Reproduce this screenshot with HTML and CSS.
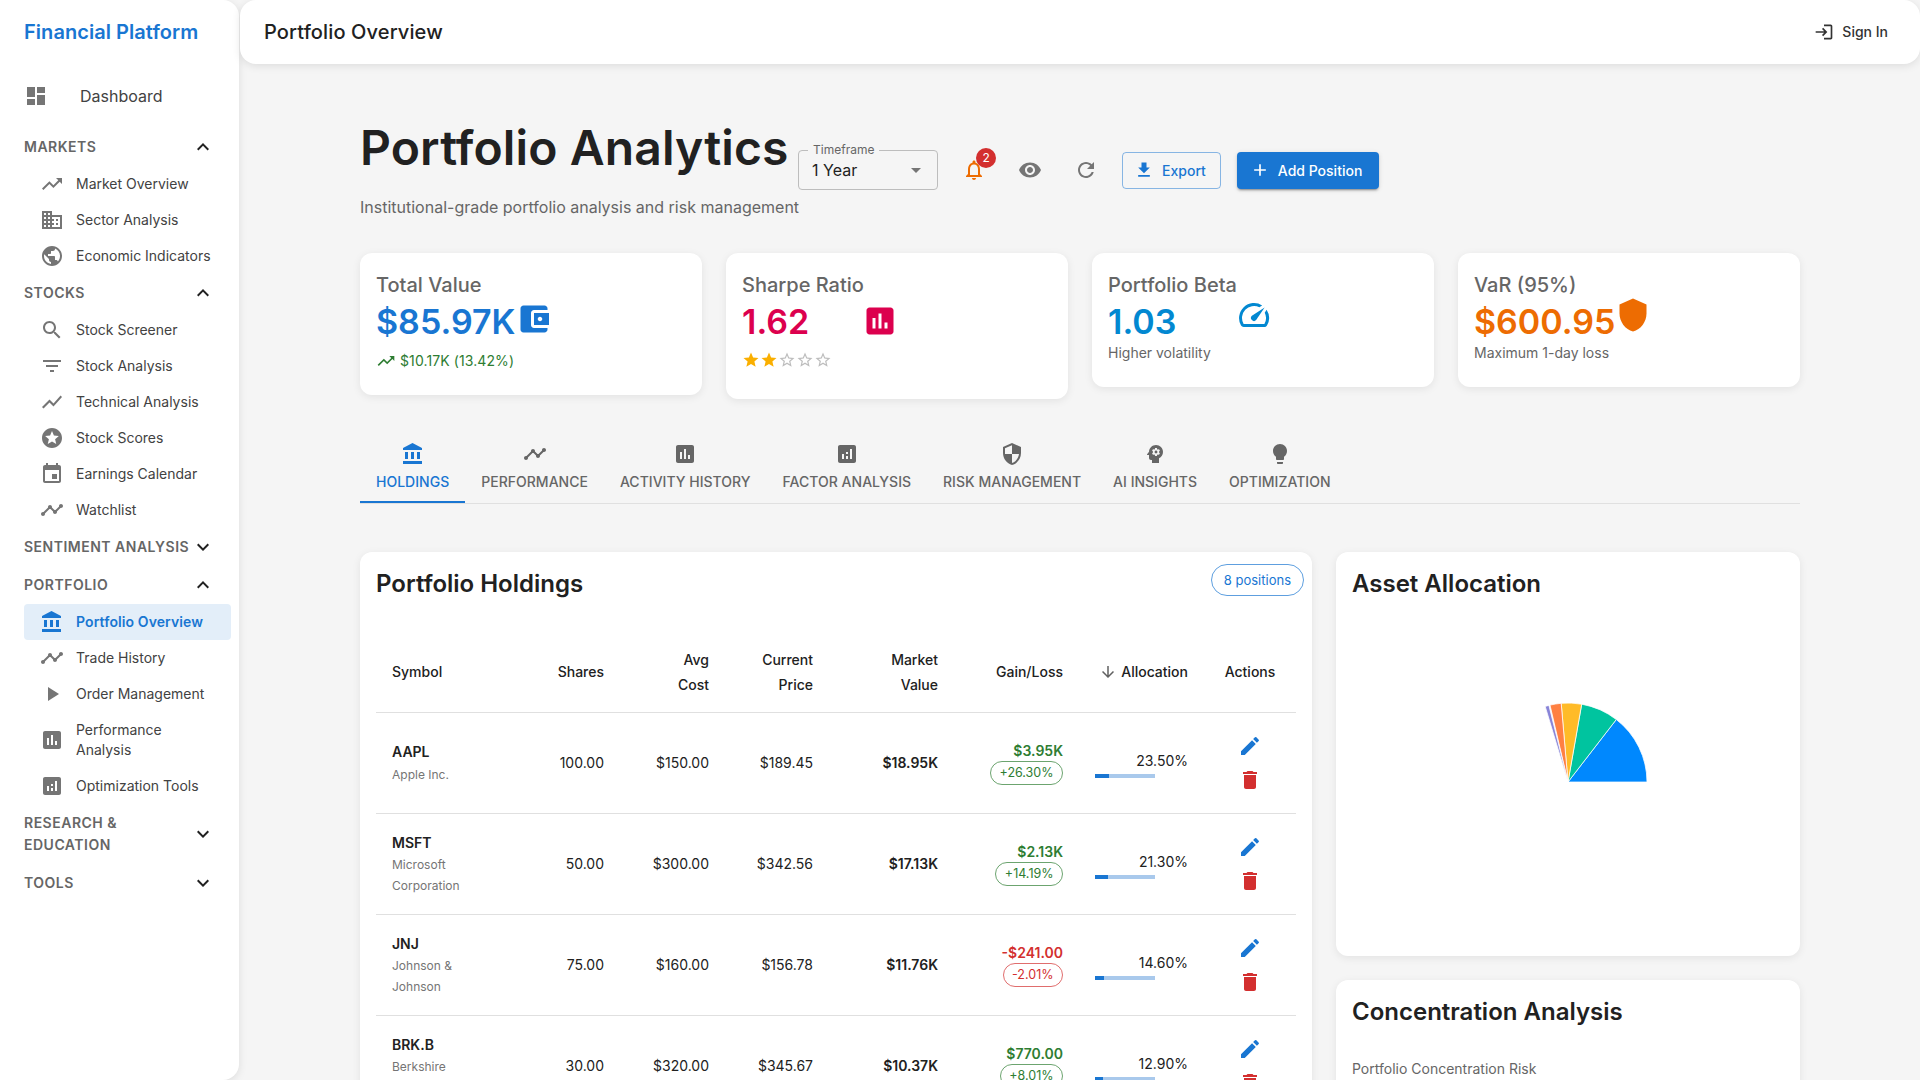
FILE: index.html
```html
<!DOCTYPE html>
<html lang="en">
<head>
    <meta charset="UTF-8">
    <meta name="viewport" content="width=device-width, initial-scale=1.0">
    <title>Portfolio Analytics</title>
    <link rel="stylesheet" href="styles.css">
</head>
<body>
    <svg class="sprite" xmlns="http://www.w3.org/2000/svg">
        <symbol id="i-dashboard" viewBox="0 0 24 24"><path d="M3 13h8V3H3v10zm0 8h8v-6H3v6zm10 0h8V11h-8v10zm0-18v6h8V3h-8z"/></symbol>
        <symbol id="i-less" viewBox="0 0 24 24"><path d="M12 8l-6 6 1.41 1.41L12 10.83l4.59 4.58L18 14z"/></symbol>
        <symbol id="i-more" viewBox="0 0 24 24"><path d="M16.59 8.59L12 13.17 7.41 8.59 6 10l6 6 6-6z"/></symbol>
        <symbol id="i-trending" viewBox="0 0 24 24"><path d="M16 6l2.29 2.29-4.88 4.88-4-4L2 16.59 3.41 18l6-6 4 4 6.3-6.29L22 12V6z"/></symbol>
        <symbol id="i-business" viewBox="0 0 24 24"><path d="M12 7V3H2v18h20V7H12zM6 19H4v-2h2v2zm0-4H4v-2h2v2zm0-4H4V9h2v2zm0-4H4V5h2v2zm4 12H8v-2h2v2zm0-4H8v-2h2v2zm0-4H8V9h2v2zm0-4H8V5h2v2zm10 12h-8v-2h2v-2h-2v-2h2v-2h-2V9h8v10zm-2-8h-2v2h2v-2zm0 4h-2v2h2v-2z"/></symbol>
        <symbol id="i-public" viewBox="0 0 24 24"><path d="M12 2C6.48 2 2 6.48 2 12s4.48 10 10 10 10-4.48 10-10S17.52 2 12 2zm-1 17.93c-3.95-.49-7-3.85-7-7.93 0-.62.08-1.21.21-1.79L9 15v1c0 1.1.9 2 2 2v1.93zm6.9-2.54c-.26-.81-1-1.39-1.9-1.39h-1v-3c0-.55-.45-1-1-1H8v-2h2c.55 0 1-.45 1-1V7h2c1.1 0 2-.9 2-2v-.41c2.93 1.19 5 4.06 5 7.41 0 2.08-.8 3.97-2.1 5.39z"/></symbol>
        <symbol id="i-search" viewBox="0 0 24 24"><path d="M15.5 14h-.79l-.28-.27C15.41 12.59 16 11.11 16 9.5 16 5.91 13.09 3 9.5 3S3 5.91 3 9.5 5.91 16 9.5 16c1.61 0 3.09-.59 4.23-1.57l.27.28v.79l5 4.99L20.49 19l-4.99-5zm-6 0C7.01 14 5 11.99 5 9.5S7.01 5 9.5 5 14 7.01 14 9.5 11.99 14 9.5 14z"/></symbol>
        <symbol id="i-filter" viewBox="0 0 24 24"><path d="M10 18h4v-2h-4v2zM3 6v2h18V6H3zm3 7h12v-2H6v2z"/></symbol>
        <symbol id="i-chart" viewBox="0 0 24 24"><path d="M3.5 18.49l6-6.01 4 4L22 6.92l-1.41-1.41-7.09 7.97-4-4L2 16.99z"/></symbol>
        <symbol id="i-stars" viewBox="0 0 24 24"><path d="M11.99 2C6.47 2 2 6.48 2 12s4.47 10 9.99 10C17.52 22 22 17.52 22 12S17.52 2 11.99 2zm4.24 16L12 15.45 7.77 18l1.12-4.81-3.73-3.23 4.92-.42L12 5l1.92 4.53 4.92.42-3.73 3.23L16.23 18z"/></symbol>
        <symbol id="i-event" viewBox="0 0 24 24"><path d="M17 12h-5v5h5v-5zM16 1v2H8V1H6v2H5c-1.11 0-1.99.9-1.99 2L3 19c0 1.1.89 2 2 2h14c1.1 0 2-.9 2-2V5c0-1.1-.9-2-2-2h-1V1h-2zm3 18H5V8h14v11z"/></symbol>
        <symbol id="i-timeline" viewBox="0 0 24 24"><path d="M23 8c0 1.1-.9 2-2 2-.18 0-.35-.02-.51-.07l-3.56 3.55c.05.16.07.34.07.52 0 1.1-.9 2-2 2s-2-.9-2-2c0-.18.02-.36.07-.52l-2.55-2.55c-.16.05-.34.07-.52.07s-.36-.02-.52-.07l-4.55 4.56c.05.16.07.33.07.51 0 1.1-.9 2-2 2s-2-.9-2-2 .9-2 2-2c.18 0 .35.02.51.07l4.56-4.55C8.02 9.36 8 9.18 8 9c0-1.1.9-2 2-2s2 .9 2 2c0 .18-.02.36-.07.52l2.55 2.55c.16-.05.34-.07.52-.07s.36.02.52.07l3.55-3.56C19.02 8.35 19 8.18 19 8c0-1.1.9-2 2-2s2 .9 2 2z"/></symbol>
        <symbol id="i-bank" viewBox="0 0 24 24"><path d="M4 10v7h3v-7H4zm6 0v7h3v-7h-3zM2 22h19v-3H2v3zm14-12v7h3v-7h-3zm-4.5-9L2 6v2h19V6l-9.5-5z"/></symbol>
        <symbol id="i-play" viewBox="0 0 24 24"><path d="M8 5v14l11-7z"/></symbol>
        <symbol id="i-assessment" viewBox="0 0 24 24"><path d="M19 3H5c-1.1 0-2 .9-2 2v14c0 1.1.9 2 2 2h14c1.1 0 2-.9 2-2V5c0-1.1-.9-2-2-2zM9 17H7v-7h2v7zm4 0h-2V7h2v10zm4 0h-2v-4h2v4z"/></symbol>
        <symbol id="i-analytics" viewBox="0 0 24 24"><path d="M19 3H5c-1.1 0-2 .9-2 2v14c0 1.1.9 2 2 2h14c1.1 0 2-.9 2-2V5c0-1.1-.9-2-2-2zM9 17H7v-5h2v5zm4 0h-2v-3h2v3zm0-5h-2v-2h2v2zm4 5h-2V7h2v10z"/></symbol>
        <symbol id="i-login" viewBox="0 0 24 24"><path d="M11 7L9.6 8.4l2.6 2.6H2v2h10.2l-2.6 2.6L11 17l5-5-5-5zm9 12h-8v2h8c1.1 0 2-.9 2-2V5c0-1.1-.9-2-2-2h-8v2h8v14z"/></symbol>
        <symbol id="i-bell" viewBox="0 0 24 24"><path d="M12 22c1.1 0 2-.9 2-2h-4c0 1.1.9 2 2 2zm6-6v-5c0-3.07-1.63-5.64-4.5-6.32V4c0-.83-.67-1.5-1.5-1.5s-1.5.67-1.5 1.5v.68C7.64 5.36 6 7.92 6 11v5l-2 2v1h16v-1l-2-2zm-2 1H8v-6c0-2.48 1.51-4.5 4-4.5s4 2.02 4 4.5v6z"/></symbol>
        <symbol id="i-eye" viewBox="0 0 24 24"><path d="M12 4.5C7 4.5 2.73 7.61 1 12c1.73 4.39 6 7.5 11 7.5s9.27-3.11 11-7.5c-1.73-4.39-6-7.5-11-7.5zM12 17c-2.76 0-5-2.24-5-5s2.24-5 5-5 5 2.24 5 5-2.24 5-5 5zm0-8c-1.66 0-3 1.34-3 3s1.34 3 3 3 3-1.34 3-3-1.34-3-3-3z"/></symbol>
        <symbol id="i-refresh" viewBox="0 0 24 24"><path d="M17.65 6.35C16.2 4.9 14.21 4 12 4c-4.42 0-7.99 3.58-7.99 8s3.57 8 7.99 8c3.73 0 6.84-2.55 7.73-6h-2.08c-.82 2.33-3.04 4-5.65 4-3.31 0-6-2.69-6-6s2.69-6 6-6c1.66 0 3.14.69 4.22 1.78L13 11h7V4l-2.35 2.35z"/></symbol>
        <symbol id="i-download" viewBox="0 0 24 24"><path d="M19 9h-4V3H9v6H5l7 7 7-7zM5 18v2h14v-2H5z"/></symbol>
        <symbol id="i-add" viewBox="0 0 24 24"><path d="M19 13h-6v6h-2v-6H5v-2h6V5h2v6h6v2z"/></symbol>
        <symbol id="i-caret" viewBox="0 0 24 24"><path d="M7 10l5 5 5-5z"/></symbol>
        <symbol id="i-wallet" viewBox="0 0 24 24"><path d="M21 18v1c0 1.1-.9 2-2 2H5c-1.11 0-2-.9-2-2V5c0-1.1.89-2 2-2h14c1.1 0 2 .9 2 2v1h-9c-1.11 0-2 .9-2 2v8c0 1.1.89 2 2 2h9zm-9-2h10V8H12v8zm4-2.5c-.83 0-1.5-.67-1.5-1.5s.67-1.5 1.5-1.5 1.5.67 1.5 1.5-.67 1.5-1.5 1.5z"/></symbol>
        <symbol id="i-speed" viewBox="0 0 24 24"><path d="M20.38 8.57l-1.23 1.85a8 8 0 0 1-.22 7.58H5.07A8 8 0 0 1 15.58 6.85l1.85-1.23A10 10 0 0 0 3.35 19a2 2 0 0 0 1.72 1h13.85a2 2 0 0 0 1.74-1 10 10 0 0 0-.27-10.44zm-9.79 6.84a2 2 0 0 0 2.83 0l5.66-8.49-8.49 5.66a2 2 0 0 0 0 2.83z"/></symbol>
        <symbol id="i-shield" viewBox="0 0 24 24"><path d="M12 1L3 5v6c0 5.55 3.84 10.74 9 12 5.16-1.26 9-6.45 9-12V5l-9-4z"/></symbol>
        <symbol id="i-security" viewBox="0 0 24 24"><path d="M12 1L3 5v6c0 5.55 3.84 10.74 9 12 5.16-1.26 9-6.45 9-12V5l-9-4zm0 10.99h7c-.53 4.12-3.28 7.79-7 8.94V12H5V6.3l7-3.11v8.8z"/></symbol>
        <symbol id="i-psychology" viewBox="0 0 24 24"><path d="M13 8.57c-.79 0-1.43.64-1.43 1.43s.64 1.43 1.43 1.43 1.43-.64 1.43-1.43-.64-1.43-1.43-1.43z"/><path d="M13 3C9.25 3 6.2 5.94 6.02 9.64L4.1 12.2c-.25.33-.01.8.4.8H6v3c0 1.1.9 2 2 2h1v3h7v-4.68c2.36-1.12 4-3.53 4-6.32 0-3.87-3.13-7-7-7zm3 7c0 .13-.01.26-.03.39l.83.66c.08.06.1.16.05.25l-.8 1.39c-.05.09-.16.12-.24.09l-.99-.4c-.21.16-.43.29-.67.39L14 13.83c-.01.1-.1.17-.2.17h-1.6c-.1 0-.18-.07-.2-.17l-.15-1.06c-.25-.1-.47-.23-.68-.39l-.99.4c-.09.03-.2 0-.25-.09l-.8-1.39c-.05-.08-.03-.19.05-.25l.84-.66c-.02-.13-.03-.26-.03-.39 0-.13.02-.27.04-.39l-.85-.66c-.08-.06-.1-.16-.05-.26l.8-1.38c.05-.09.15-.12.24-.09l1 .4c.2-.15.43-.29.67-.39L12 6.17c.02-.1.1-.17.2-.17h1.6c.1 0 .18.07.2.17l.15 1.06c.24.1.46.23.67.39l1-.4c.09-.03.2 0 .24.09l.8 1.38c.05.09.03.2-.05.26l-.85.66c.03.12.04.25.04.39z"/></symbol>
        <symbol id="i-bulb" viewBox="0 0 24 24"><path d="M9 21c0 .55.45 1 1 1h4c.55 0 1-.45 1-1v-1H9v1zm3-19C8.14 2 5 5.14 5 9c0 2.38 1.19 4.47 3 5.74V17c0 .55.45 1 1 1h6c.55 0 1-.45 1-1v-2.26c1.81-1.27 3-3.36 3-5.74 0-3.86-3.14-7-7-7z"/></symbol>
        <symbol id="i-edit" viewBox="0 0 24 24"><path d="M3 17.25V21h3.75L17.81 9.94l-3.75-3.75L3 17.25zM20.71 7.04c.39-.39.39-1.02 0-1.41l-2.34-2.34a.9959.9959 0 0 0-1.41 0l-1.83 1.83 3.75 3.75 1.83-1.83z"/></symbol>
        <symbol id="i-delete" viewBox="0 0 24 24"><path d="M6 19c0 1.1.9 2 2 2h8c1.1 0 2-.9 2-2V7H6v12zM19 4h-3.5l-1-1h-5l-1 1H5v2h14V4z"/></symbol>
        <symbol id="i-down" viewBox="0 0 24 24"><path d="M20 12l-1.41-1.41L13 16.17V4h-2v12.17l-5.58-5.59L4 12l8 8 8-8z"/></symbol>
        <symbol id="i-star" viewBox="0 0 24 24"><path d="M12 17.27L18.18 21l-1.64-7.03L22 9.24l-7.19-.61L12 2 9.19 8.63 2 9.24l5.46 4.73L5.82 21z"/></symbol>
        <symbol id="i-star-o" viewBox="0 0 24 24"><path d="M22 9.24l-7.19-.62L12 2 9.19 8.63 2 9.24l5.46 4.73L5.82 21 12 17.27 18.18 21l-1.63-7.03L22 9.24zM12 15.4l-3.76 2.27 1-4.28-3.32-2.88 4.38-.38L12 6.1l1.71 4.04 4.38.38-3.32 2.88 1 4.28L12 15.4z"/></symbol>
    </svg>

    <aside class="sidebar">
        <div class="logo">Financial Platform</div>
        <a class="nav-top"><svg class="ic"><use href="#i-dashboard"/></svg><span>Dashboard</span></a>

        <div class="nav-head"><span>Markets</span><svg class="ic"><use href="#i-less"/></svg></div>
        <a class="nav-item"><svg class="ic"><use href="#i-trending"/></svg><span>Market Overview</span></a>
        <a class="nav-item"><svg class="ic"><use href="#i-business"/></svg><span>Sector Analysis</span></a>
        <a class="nav-item"><svg class="ic"><use href="#i-public"/></svg><span>Economic Indicators</span></a>

        <div class="nav-head"><span>Stocks</span><svg class="ic"><use href="#i-less"/></svg></div>
        <a class="nav-item"><svg class="ic"><use href="#i-search"/></svg><span>Stock Screener</span></a>
        <a class="nav-item"><svg class="ic"><use href="#i-filter"/></svg><span>Stock Analysis</span></a>
        <a class="nav-item"><svg class="ic"><use href="#i-chart"/></svg><span>Technical Analysis</span></a>
        <a class="nav-item"><svg class="ic"><use href="#i-stars"/></svg><span>Stock Scores</span></a>
        <a class="nav-item"><svg class="ic"><use href="#i-event"/></svg><span>Earnings Calendar</span></a>
        <a class="nav-item"><svg class="ic"><use href="#i-timeline"/></svg><span>Watchlist</span></a>

        <div class="nav-head"><span>Sentiment Analysis</span><svg class="ic"><use href="#i-more"/></svg></div>

        <div class="nav-head"><span>Portfolio</span><svg class="ic"><use href="#i-less"/></svg></div>
        <a class="nav-item active"><svg class="ic"><use href="#i-bank"/></svg><span>Portfolio Overview</span></a>
        <a class="nav-item"><svg class="ic"><use href="#i-timeline"/></svg><span>Trade History</span></a>
        <a class="nav-item"><svg class="ic"><use href="#i-play"/></svg><span>Order Management</span></a>
        <a class="nav-item"><svg class="ic"><use href="#i-assessment"/></svg><span>Performance Analysis</span></a>
        <a class="nav-item"><svg class="ic"><use href="#i-analytics"/></svg><span>Optimization Tools</span></a>

        <div class="nav-head"><span>Research &amp; Education</span><svg class="ic"><use href="#i-more"/></svg></div>
        <div class="nav-head"><span>Tools</span><svg class="ic"><use href="#i-more"/></svg></div>
    </aside>

    <div class="page">
        <header class="appbar">
            <div class="appbar-title">Portfolio Overview</div>
            <a class="sign-in"><svg class="ic ic-20"><use href="#i-login"/></svg>Sign In</a>
        </header>

        <main class="content">
            <section class="page-head">
                <div class="title-block">
                    <h1>Portfolio Analytics</h1>
                    <p>Institutional-grade portfolio analysis and risk management</p>
                </div>
                <div class="select">
                    <span class="select-label">Timeframe</span>
                    <span>1 Year</span>
                    <svg class="ic"><use href="#i-caret"/></svg>
                </div>
                <div class="icon-btn orange">
                    <svg class="ic"><use href="#i-bell"/></svg>
                    <span class="badge">2</span>
                </div>
                <div class="icon-btn"><svg class="ic"><use href="#i-eye"/></svg></div>
                <div class="icon-btn"><svg class="ic"><use href="#i-refresh"/></svg></div>
                <button class="btn btn-outline"><svg class="ic ic-20"><use href="#i-download"/></svg>Export</button>
                <button class="btn btn-solid"><svg class="ic ic-20"><use href="#i-add"/></svg>Add Position</button>
            </section>

            <section class="stats">
                <div class="stat">
                    <div class="stat-title">Total Value</div>
                    <div class="stat-row blue">
                        <span class="stat-value">$85.97K</span>
                        <svg class="ic ic-36"><use href="#i-wallet"/></svg>
                    </div>
                    <div class="stat-change"><svg class="ic ic-20"><use href="#i-trending"/></svg>$10.17K (13.42%)</div>
                </div>
                <div class="stat">
                    <div class="stat-title">Sharpe Ratio</div>
                    <div class="stat-row pink">
                        <span class="stat-value w-120">1.62</span>
                        <svg class="ic ic-36 nudge-low"><use href="#i-assessment"/></svg>
                    </div>
                    <div class="rating">
                        <svg class="ic"><use href="#i-star"/></svg>
                        <svg class="ic"><use href="#i-star"/></svg>
                        <svg class="ic off"><use href="#i-star-o"/></svg>
                        <svg class="ic off"><use href="#i-star-o"/></svg>
                        <svg class="ic off"><use href="#i-star-o"/></svg>
                    </div>
                </div>
                <div class="stat">
                    <div class="stat-title">Portfolio Beta</div>
                    <div class="stat-row sky">
                        <span class="stat-value w-128">1.03</span>
                        <svg class="ic ic-36 nudge-up"><use href="#i-speed"/></svg>
                    </div>
                    <div class="stat-note">Higher volatility</div>
                </div>
                <div class="stat">
                    <div class="stat-title">VaR (95%)</div>
                    <div class="stat-row orange">
                        <span class="stat-value">$600.95</span>
                        <svg class="ic ic-36 nudge-up"><use href="#i-shield"/></svg>
                    </div>
                    <div class="stat-note">Maximum 1-day loss</div>
                </div>
            </section>

            <nav class="tabs">
                <a class="tab active"><svg class="ic"><use href="#i-bank"/></svg>Holdings</a>
                <a class="tab"><svg class="ic"><use href="#i-timeline"/></svg>Performance</a>
                <a class="tab"><svg class="ic"><use href="#i-assessment"/></svg>Activity History</a>
                <a class="tab"><svg class="ic"><use href="#i-analytics"/></svg>Factor Analysis</a>
                <a class="tab"><svg class="ic"><use href="#i-security"/></svg>Risk Management</a>
                <a class="tab"><svg class="ic"><use href="#i-psychology"/></svg>AI Insights</a>
                <a class="tab"><svg class="ic"><use href="#i-bulb"/></svg>Optimization</a>
            </nav>

            <section class="columns">
                <div class="card">
                    <div class="card-head">
                        <h2>Portfolio Holdings</h2>
                        <span class="chip-count">8 positions</span>
                    </div>
                    <table class="holdings">
                        <thead>
                            <tr>
                                <th class="col-symbol">Symbol</th>
                                <th class="col-shares">Shares</th>
                                <th class="col-avg">Avg<br>Cost</th>
                                <th class="col-price">Current<br>Price</th>
                                <th class="col-market">Market<br>Value</th>
                                <th class="col-gain">Gain/Loss</th>
                                <th class="col-alloc"><svg class="ic ic-18"><use href="#i-down"/></svg>Allocation</th>
                                <th class="col-actions">Actions</th>
                            </tr>
                        </thead>
                        <tbody>
                            <tr>
                                <td class="col-symbol"><div class="ticker">AAPL</div><div class="company">Apple Inc.</div></td>
                                <td>100.00</td>
                                <td>$150.00</td>
                                <td>$189.45</td>
                                <td class="strong">$18.95K</td>
                                <td><div class="gain up">$3.95K</div><span class="chip up">+26.30%</span></td>
                                <td><div class="pct">23.50%</div><div class="bar"><div class="bar-fill" style="width: 23.5%"></div></div></td>
                                <td class="col-actions"><svg class="ic act-edit"><use href="#i-edit"/></svg><svg class="ic act-del"><use href="#i-delete"/></svg></td>
                            </tr>
                            <tr>
                                <td class="col-symbol"><div class="ticker">MSFT</div><div class="company">Microsoft Corporation</div></td>
                                <td>50.00</td>
                                <td>$300.00</td>
                                <td>$342.56</td>
                                <td class="strong">$17.13K</td>
                                <td><div class="gain up">$2.13K</div><span class="chip up">+14.19%</span></td>
                                <td><div class="pct">21.30%</div><div class="bar"><div class="bar-fill" style="width: 21.3%"></div></div></td>
                                <td class="col-actions"><svg class="ic act-edit"><use href="#i-edit"/></svg><svg class="ic act-del"><use href="#i-delete"/></svg></td>
                            </tr>
                            <tr>
                                <td class="col-symbol"><div class="ticker">JNJ</div><div class="company">Johnson &amp; Johnson</div></td>
                                <td>75.00</td>
                                <td>$160.00</td>
                                <td>$156.78</td>
                                <td class="strong">$11.76K</td>
                                <td><div class="gain down">-$241.00</div><span class="chip down">-2.01%</span></td>
                                <td><div class="pct">14.60%</div><div class="bar"><div class="bar-fill" style="width: 14.6%"></div></div></td>
                                <td class="col-actions"><svg class="ic act-edit"><use href="#i-edit"/></svg><svg class="ic act-del"><use href="#i-delete"/></svg></td>
                            </tr>
                            <tr>
                                <td class="col-symbol"><div class="ticker">BRK.B</div><div class="company">Berkshire Hathaway</div></td>
                                <td>30.00</td>
                                <td>$320.00</td>
                                <td>$345.67</td>
                                <td class="strong">$10.37K</td>
                                <td><div class="gain up">$770.00</div><span class="chip up">+8.01%</span></td>
                                <td><div class="pct">12.90%</div><div class="bar"><div class="bar-fill" style="width: 12.9%"></div></div></td>
                                <td class="col-actions"><svg class="ic act-edit"><use href="#i-edit"/></svg><svg class="ic act-del"><use href="#i-delete"/></svg></td>
                            </tr>
                        </tbody>
                    </table>
                </div>

                <div class="side">
                    <div class="card">
                        <h2>Asset Allocation</h2>
                        <svg class="pie" viewBox="-216 -150 432 300">
                            <path fill="#0088fe" d="M0 0L79 0A79 79 0 0 0 48.3 -62.5Z"/>
                            <path fill="#00c49f" d="M0 0L48.3 -62.5A79 79 0 0 0 13.7 -77.8Z"/>
                            <path fill="#ffbb28" d="M0 0L13.7 -77.8A79 79 0 0 0 -6.8 -78.7Z"/>
                            <path fill="#ff8042" d="M0 0L-6.8 -78.7A79 79 0 0 0 -18 -76.9Z"/>
                            <path fill="#8884d8" d="M0 0L-19.1 -76.6A79 79 0 0 0 -22.8 -75.6Z"/>
                        </svg>
                    </div>
                    <div class="card">
                        <h2>Concentration Analysis</h2>
                        <p class="risk-label">Portfolio Concentration Risk</p>
                    </div>
                </div>
            </section>
        </main>
    </div>
</body>
</html>
```

FILE: styles.css
```css
* { box-sizing: border-box; }
html, body {
    height: 100%;
    margin: 0;
    overflow: hidden;
}
body {
    display: flex;
    font-family: 'Inter', 'Liberation Sans', sans-serif;
    background-color: #f5f5f5;
    color: #212121;
}
h1, h2, p { margin: 0; }
.sprite { display: none; }

.ic {
    width: 24px;
    height: 24px;
    fill: currentColor;
    flex: none;
}
.ic-18 { width: 18px; height: 18px; }
.ic-20 { width: 20px; height: 20px; }
.ic-36 { width: 36px; height: 36px; }

/* sidebar */
.sidebar {
    width: 239px;
    margin-right: 1px;
    flex: none;
    background: white;
    border-radius: 0 16px 16px 0;
    box-shadow: 0px 2px 8px rgba(0, 0, 0, 0.1);
    padding-left: 24px;
}
.logo {
    height: 74px;
    padding-top: 19px;
    font-size: 20px;
    line-height: 26px;
    font-weight: 600;
    letter-spacing: 0.05px;
    color: #1976d2;
}
.nav-top {
    display: flex;
    align-items: center;
    gap: 32px;
    height: 44px;
    margin-bottom: 10px;
    font-size: 16px;
    color: #424242;
}
.nav-top .ic { color: #757575; }
.nav-head {
    display: flex;
    align-items: center;
    justify-content: space-between;
    width: 191px;
    padding: 8px 0;
    font-size: 14px;
    line-height: 22px;
    font-weight: 600;
    letter-spacing: 0.5px;
    text-transform: uppercase;
    color: #666;
}
.nav-head .ic { color: #212121; margin: -1px 0; }
.nav-item {
    display: flex;
    align-items: center;
    gap: 12px;
    width: 207px;
    padding: 8px 16px;
    border-radius: 4px;
    font-size: 14px;
    line-height: 20px;
    color: #424242;
}
.nav-item .ic { color: #757575; margin: -2px 0; }
.nav-item.active {
    background-color: #e3eef9;
    color: #1976d2;
    font-weight: 600;
    letter-spacing: 0.1px;
}
.nav-item.active .ic { color: #1976d2; }

/* top bar */
.page {
    flex: 1;
    min-width: 0;
}
.appbar {
    display: flex;
    align-items: center;
    justify-content: space-between;
    height: 64px;
    padding: 0 32px 0 24px;
    background: white;
    border-radius: 16px;
    box-shadow: 0px 2px 8px rgba(0, 0, 0, 0.1);
}
.appbar-title {
    font-size: 20px;
    font-weight: 500;
    letter-spacing: 0.13px;
}
.sign-in {
    display: flex;
    align-items: center;
    gap: 8px;
    font-size: 14px;
    line-height: 20px;
    font-weight: 500;
    color: #333;
}

/* page heading */
.content {
    width: 1440px;
    margin: 0 auto;
    padding-top: 55px;
}
.page-head {
    display: flex;
    align-items: center;
    gap: 16px;
}
.title-block { margin-right: -17px; }
h1 {
    font-size: 48px;
    line-height: 58px;
    font-weight: 600;
    letter-spacing: 0.13px;
    white-space: nowrap;
}
.title-block p {
    margin-top: 17px;
    font-size: 16px;
    line-height: 26px;
    color: #666;
    white-space: nowrap;
}
.select {
    position: relative;
    display: flex;
    align-items: center;
    justify-content: space-between;
    width: 140px;
    height: 40px;
    padding: 0 9px 0 13px;
    border: 1px solid #bdbdbd;
    border-radius: 4px;
    font-size: 16px;
}
.select .ic { color: #757575; }
.select-label {
    position: absolute;
    left: 9px;
    top: -8px;
    padding: 0 5px;
    background-color: #f5f5f5;
    font-size: 12px;
    line-height: 14px;
    color: #666;
}
.icon-btn {
    position: relative;
    display: flex;
    align-items: center;
    justify-content: center;
    width: 40px;
    height: 40px;
    color: #757575;
}
.icon-btn.orange { color: #ed6c02; }
.badge {
    position: absolute;
    left: 22px;
    top: -2px;
    width: 20px;
    height: 20px;
    border-radius: 50%;
    background-color: #d32f2f;
    color: white;
    font-size: 12px;
    line-height: 20px;
    text-align: center;
}
.btn {
    display: flex;
    align-items: center;
    height: 37px;
    margin-top: 1px;
    padding: 0 15px;
    border-radius: 4px;
    font-family: inherit;
    font-size: 14px;
    font-weight: 500;
}
.btn .ic { margin: 0 8px 0 -4px; }
.btn-outline {
    padding-right: 14px;
    background: transparent;
    color: #1976d2;
    border: 1px solid rgba(25, 118, 210, 0.5);
}
.btn-solid {
    padding: 0 17px;
    background-color: #1976d2;
    color: white;
    border: none;
    box-shadow: 0px 3px 1px -2px rgba(0, 0, 0, 0.2), 0px 2px 2px rgba(0, 0, 0, 0.14), 0px 1px 5px rgba(0, 0, 0, 0.12);
}

/* stat cards */
.stats {
    display: grid;
    grid-template-columns: repeat(4, 1fr);
    gap: 24px;
    align-items: start;
    margin-top: 33px;
}
.stat, .card {
    background: white;
    border-radius: 12px;
    box-shadow: 0px 2px 8px rgba(0, 0, 0, 0.08);
}
.stat { padding: 16px 16px 24px; }
.stat-title {
    font-size: 20px;
    line-height: 32px;
    font-weight: 500;
    color: #666;
}
.stat-row {
    display: flex;
    align-items: flex-start;
    height: 40px;
}
.stat-value {
    padding-top: 1px;
    font-size: 34px;
    line-height: 40px;
    font-weight: 600;
}
.w-120 { min-width: 120px; }
.w-128 { min-width: 128px; }
.nudge-low { margin-top: 2px; }
.nudge-up { margin-top: -4px; }
.blue { color: #1976d2; }
.pink { color: #dc004e; }
.sky { color: #0288d1; }
.orange { color: #ed6c02; }
.stat-change {
    display: flex;
    align-items: center;
    gap: 4px;
    margin-top: 10px;
    font-size: 14px;
    line-height: 20px;
    letter-spacing: 0.1px;
    color: #2e7d32;
}
.stat-note {
    margin-top: 2px;
    font-size: 14px;
    line-height: 20px;
    color: #666;
}
.rating {
    display: flex;
    height: 18px;
    margin: 10px 0 6px;
    color: #faaf00;
}
.rating .ic { width: 18px; height: 18px; }
.rating .off { color: #bdbdbd; }

/* tabs */
.tabs {
    display: flex;
    margin-top: 32px;
    border-bottom: 1px solid #e0e0e0;
}
.tab {
    display: flex;
    flex-direction: column;
    align-items: center;
    gap: 6px;
    height: 72px;
    padding: 11px 16px 0;
    font-size: 14px;
    line-height: 20px;
    font-weight: 500;
    letter-spacing: 0.015px;
    text-transform: uppercase;
    color: #666;
}
.tab.active {
    color: #1976d2;
    border-bottom: 2px solid #1976d2;
}

/* holdings + side cards */
.columns {
    display: grid;
    grid-template-columns: 952px 464px;
    gap: 24px;
    align-items: start;
    margin-top: 48px;
}
.card { padding: 16px; }
.side {
    display: flex;
    flex-direction: column;
    gap: 24px;
}
h2 {
    font-size: 24px;
    line-height: 32px;
    font-weight: 600;
}
.card-head {
    display: flex;
    justify-content: space-between;
    margin-bottom: 31px;
}
.chip-count {
    height: 32px;
    margin: -4px -8px 0 0;
    padding: 0 12px;
    border: 1px solid rgba(25, 118, 210, 0.7);
    border-radius: 16px;
    font-size: 13px;
    line-height: 30px;
    color: #1976d2;
}
.holdings {
    width: 920px;
    table-layout: fixed;
    border-collapse: collapse;
    font-size: 14px;
    line-height: 24.5px;
}
.holdings th, .holdings td {
    padding: 16px;
    text-align: right;
    border-bottom: 1px solid #e0e0e0;
}
.holdings th {
    padding-top: 17px;
    padding-bottom: 15px;
    font-weight: 500;
}
.holdings th .ic {
    margin-right: 4px;
    vertical-align: -4px;
    color: #616161;
}
.holdings th.col-symbol, .holdings td.col-symbol { text-align: left; }
.holdings th.col-actions, .holdings td.col-actions {
    text-align: center;
    padding-left: 8px;
    padding-right: 8px;
}
.col-symbol { width: 160px; }
.col-shares { width: 84px; }
.col-avg { width: 105px; }
.col-price { width: 104px; }
.col-market { width: 125px; }
.col-gain { width: 125px; }
.col-alloc { width: 125px; padding-left: 0 !important; white-space: nowrap; }
.col-actions { width: 92px; }
.ticker { font-weight: 600; }
.company {
    max-width: 100px;
    margin-top: -1px;
    padding-bottom: 1px;
    font-size: 12px;
    line-height: 21px;
    color: #757575;
}
.strong { font-weight: 600; }
.gain {
    font-weight: 600;
    line-height: 20px;
}
.up { color: #2e7d32; }
.down { color: #d32f2f; }
.chip {
    display: inline-block;
    height: 24px;
    padding: 0 8.5px;
    border: 1px solid;
    border-radius: 12px;
    font-size: 12.5px;
    line-height: 22px;
    vertical-align: top;
}
.chip.up { border-color: rgba(46, 125, 50, 0.7); }
.chip.down { border-color: rgba(211, 47, 47, 0.7); }
.pct { line-height: 24px; }
.bar {
    width: 60px;
    height: 4px;
    margin-top: 1px;
    background-color: #a9c9ec;
}
.bar-fill {
    height: 100%;
    background-color: #1976d2;
}
.act-edit, .act-del {
    display: block;
    margin: 5px auto;
}
.act-edit { color: #1976d2; margin-bottom: 10px; }
.act-del { color: #d32f2f; }
.pie {
    display: block;
    width: 100%;
    height: 300px;
    margin: 32px 0 8px;
}
.pie path {
    stroke: white;
    stroke-width: 0.75;
}
.risk-label {
    margin-top: 31px;
    font-size: 14px;
    line-height: 20px;
    color: #666;
}
```
